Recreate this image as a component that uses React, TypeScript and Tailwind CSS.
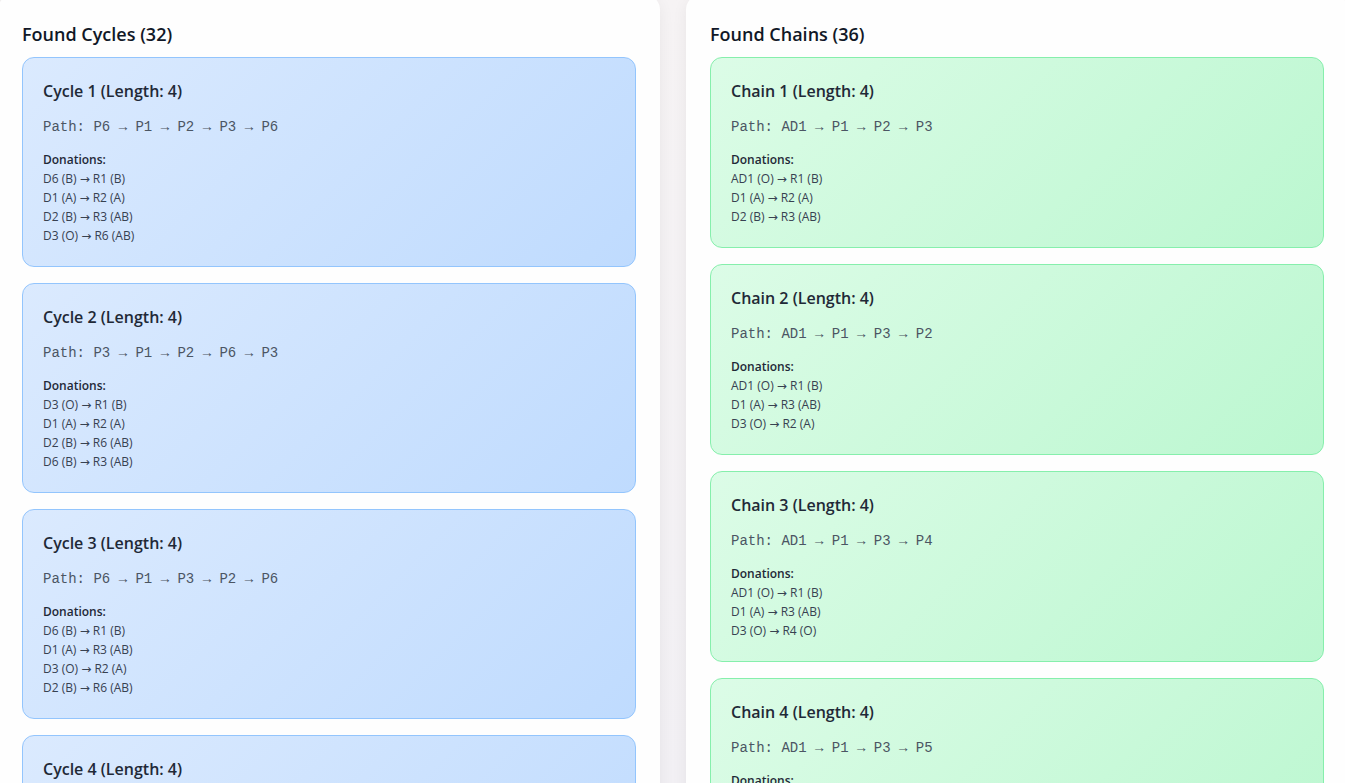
type Result = {
  path?: string;
  donations?: string[];
};

const cycles: Result[] = [
  {
    path: 'P6 → P1 → P2 → P3 → P6',
    donations: ['D6 (B) → R1 (B)', 'D1 (A) → R2 (A)', 'D2 (B) → R3 (AB)', 'D3 (O) → R6 (AB)'],
  },
  {
    path: 'P3 → P1 → P2 → P6 → P3',
    donations: ['D3 (O) → R1 (B)', 'D1 (A) → R2 (A)', 'D2 (B) → R6 (AB)', 'D6 (B) → R3 (AB)'],
  },
  {
    path: 'P6 → P1 → P3 → P2 → P6',
    donations: ['D6 (B) → R1 (B)', 'D1 (A) → R3 (AB)', 'D3 (O) → R2 (A)', 'D2 (B) → R6 (AB)'],
  },
  {},
];

const chains: Result[] = [
  {
    path: 'AD1 → P1 → P2 → P3',
    donations: ['AD1 (O) → R1 (B)', 'D1 (A) → R2 (A)', 'D2 (B) → R3 (AB)'],
  },
  {
    path: 'AD1 → P1 → P3 → P2',
    donations: ['AD1 (O) → R1 (B)', 'D1 (A) → R3 (AB)', 'D3 (O) → R2 (A)'],
  },
  {
    path: 'AD1 → P1 → P3 → P4',
    donations: ['AD1 (O) → R1 (B)', 'D1 (A) → R3 (AB)', 'D3 (O) → R4 (O)'],
  },
  { path: 'AD1 → P1 → P3 → P5', donations: [] },
];

const tones = {
  blue: 'min-h-[210px] border-[#93c5fd] from-[#dbeafe] to-[#bfdbfe]',
  green: 'min-h-[191px] border-[#86efac] from-[#dcfce7] to-[#bbf7d0]',
};

function ResultCard({ title, result, tone }: { title: string; result: Result; tone: keyof typeof tones }) {
  return (
    <article className={`rounded-xl border bg-linear-135 px-5 pt-5 ${tones[tone]}`}>
      <h3 className="mb-3 text-[16px] leading-[26px] font-semibold text-[#1f2937]">{title}</h3>
      {result.path && (
        <p className="mb-3 font-['Courier_New','Liberation_Mono',monospace] text-[14px] leading-[22px] text-[#4b5563]">
          Path: {result.path}
        </p>
      )}
      {result.donations && (
        <div className="pb-5 text-[12px] leading-[19px] text-[#374151]">
          <strong className="block font-semibold text-[#1f2937]">Donations:</strong>
          <ul>
            {result.donations.map((donation) => (
              <li key={donation}>{donation}</li>
            ))}
          </ul>
        </div>
      )}
    </article>
  );
}

function Panel({ heading, label, results, tone }: { heading: string; label: string; results: Result[]; tone: keyof typeof tones }) {
  return (
    <section className="rounded-2xl bg-[#fefefe] px-6 pt-[26px] pb-6 shadow-[0_4px_16px_rgba(0,0,0,0.06)]">
      <h2 className="mb-[9px] text-[18px] leading-[28px] font-semibold text-[#111827]">{heading}</h2>
      <div className="flex flex-col gap-4">
        {results.map((result, index) => (
          <ResultCard key={index} title={`${label} ${index + 1} (Length: 4)`} result={result} tone={tone} />
        ))}
      </div>
    </section>
  );
}

export default function App() {
  return (
    <div className="h-screen overflow-hidden bg-linear-to-b from-[#f6f3f4] to-[#f2f0f4] font-['Segoe_UI','Open_Sans','DejaVu_Sans',sans-serif]">
      <main className="-mt-1.5 -mr-[3px] -ml-0.5 grid grid-cols-2 gap-[26px]">
        <Panel heading="Found Cycles (32)" label="Cycle" results={cycles} tone="blue" />
        <Panel heading="Found Chains (36)" label="Chain" results={chains} tone="green" />
      </main>
    </div>
  );
}
